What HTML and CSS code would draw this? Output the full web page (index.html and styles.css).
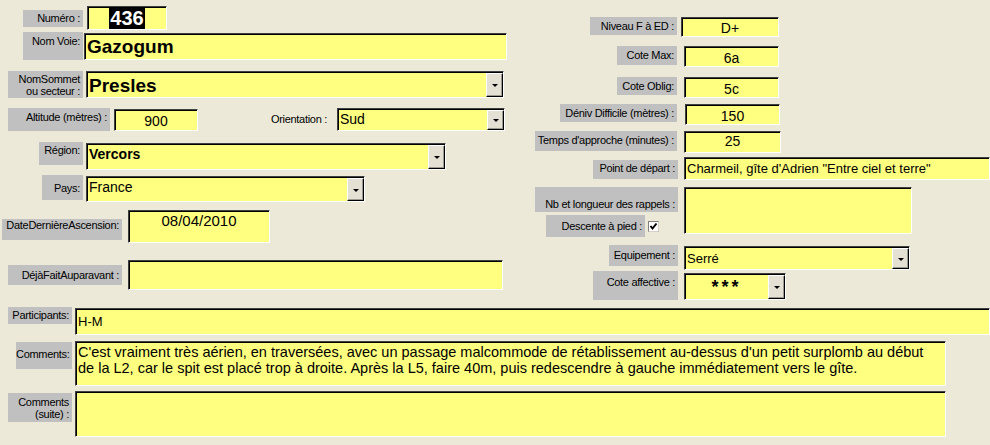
FILE: index.html
```html
<!DOCTYPE html>
<html lang="fr">
<head>
  <meta charset="UTF-8">
  <title>Voies</title>
  <link rel="stylesheet" href="styles.css">
</head>
<body>
  <div class="form">
    <div class="top">
      <div class="col-left">
        <div class="row r-numero">
          <div class="lbl">Numéro :</div>
          <div class="fld"><div class="val center"><span class="sel">436</span></div></div>
        </div>
        <div class="row r-voie">
          <div class="lbl">Nom Voie:</div>
          <div class="fld big"><div class="val">Gazogum</div></div>
        </div>
        <div class="row r-sommet">
          <div class="lbl two">NomSommet<br>ou secteur :</div>
          <div class="fld big"><div class="val">Presles</div><div class="drop"></div></div>
        </div>
        <div class="row r-alt">
          <div class="lbl">Altitude (mètres) :</div>
          <div class="fld alt"><div class="val center">900</div></div>
          <div class="lbl plain">Orientation :</div>
          <div class="fld orient"><div class="val">Sud</div><div class="drop"></div></div>
        </div>
        <div class="row r-region">
          <div class="lbl">Région:</div>
          <div class="fld"><div class="val bold">Vercors</div><div class="drop"></div></div>
        </div>
        <div class="row r-pays">
          <div class="lbl">Pays:</div>
          <div class="fld"><div class="val">France</div><div class="drop"></div></div>
        </div>
        <div class="row r-date">
          <div class="lbl">DateDernièreAscension:</div>
          <div class="fld"><div class="val center">08/04/2010</div></div>
        </div>
        <div class="row r-deja">
          <div class="lbl">DéjàFaitAuparavant :</div>
          <div class="fld"><div class="val"></div></div>
        </div>
      </div>

      <div class="col-right">
        <div class="row r-niveau">
          <div class="lbl">Niveau F à ED :</div>
          <div class="fld"><div class="val center">D+</div></div>
        </div>
        <div class="row r-cmax">
          <div class="lbl">Cote Max:</div>
          <div class="fld"><div class="val center">6a</div></div>
        </div>
        <div class="row r-cobl">
          <div class="lbl">Cote Oblig:</div>
          <div class="fld"><div class="val center">5c</div></div>
        </div>
        <div class="row r-deniv">
          <div class="lbl">Déniv Difficile (mètres) :</div>
          <div class="fld"><div class="val center">150</div></div>
        </div>
        <div class="row r-temps">
          <div class="lbl">Temps d'approche (minutes) :</div>
          <div class="fld"><div class="val center">25</div></div>
        </div>
        <div class="row r-point">
          <div class="lbl">Point de départ :</div>
          <div class="fld small"><div class="val">Charmeil, gîte d'Adrien "Entre ciel et terre"</div></div>
        </div>
        <div class="row r-rappels">
          <div class="lbl-group">
            <div class="lbl nb">Nb et longueur des rappels :</div>
            <div class="descente">
              <div class="lbl">Descente à pied :</div>
              <svg class="check" width="11" height="11" viewBox="0 0 11 11">
                <rect x="0.5" y="0.5" width="10" height="10" fill="#fff" stroke="#808080"/>
                <path d="M0.5 10.5 H10.5 V0.5" fill="none" stroke="#d4d0c8"/>
                <path d="M2.5 5 L4.5 7.5 L8.5 2.5" fill="none" stroke="#000" stroke-width="2"/>
              </svg>
            </div>
          </div>
          <div class="fld"><div class="val"></div></div>
        </div>
        <div class="row r-equip">
          <div class="lbl">Equipement :</div>
          <div class="fld small"><div class="val">Serré</div><div class="drop"></div></div>
        </div>
        <div class="row r-cote">
          <div class="lbl">Cote affective :</div>
          <div class="fld"><div class="val center stars">***</div><div class="drop"></div></div>
        </div>
      </div>
    </div>

    <div class="bottom">
      <div class="row r-part">
        <div class="lbl">Participants:</div>
        <div class="fld small"><div class="val">H-M</div></div>
      </div>
      <div class="row r-comm">
        <div class="lbl">Comments:</div>
        <div class="fld"><div class="val">C'est vraiment très aérien, en traversées, avec un passage malcommode de rétablissement au-dessus d'un petit surplomb au début<br>de la L2, car le spit est placé trop à droite. Après la L5, faire 40m, puis redescendre à gauche immédiatement vers le gîte.</div></div>
      </div>
      <div class="row r-suite">
        <div class="lbl two">Comments<br>(suite) :</div>
        <div class="fld"><div class="val"></div></div>
      </div>
    </div>
  </div>
</body>
</html>
```

FILE: styles.css
```css
body {
  margin: 0;
  background: #ece9d8;
  font-family: "Liberation Sans", Arial, sans-serif;
  width: 990px;
  height: 445px;
  overflow: hidden;
}
.form {
  width: 990px;
}
.top {
  display: flex;
}
.col-left {
  width: 530px;
  padding-top: 6px;
}
.col-right {
  width: 460px;
  padding-top: 17px;
}
.row {
  display: flex;
  align-items: flex-start;
}

/* labels */
.lbl {
  box-sizing: border-box;
  background: #c0c0c0;
  color: #000;
  font-size: 11px;
  letter-spacing: -0.3px;
  line-height: 13px;
  text-align: right;
  padding: 3px 3px 0 0;
  white-space: nowrap;
  flex-shrink: 0;
}
.lbl.two {
  line-height: 12px;
  padding-top: 2px;
}
.lbl.plain {
  background: none;
}

/* fields */
.fld {
  box-sizing: border-box;
  display: flex;
  flex-shrink: 0;
  background: #ffff80;
  border: 1px solid;
  border-color: #404040 #fff #fff #404040;
  box-shadow: inset 1px 1px 0 #000;
  color: #000;
  font-size: 14px;
  line-height: 16px;
  overflow: hidden;
}
.val {
  flex: 1;
  padding: 2px 0 0 2px;
  white-space: nowrap;
  overflow: hidden;
}
.val.center {
  text-align: center;
  padding-left: 0;
}
.bold {
  font-weight: bold;
}
.fld.big {
  font-size: 19px;
  line-height: 22px;
  font-weight: bold;
}
.fld.small {
  font-size: 13px;
  line-height: 15px;
}
.drop {
  box-sizing: border-box;
  width: 17px;
  margin: 1px 0 0 0;
  background: #e4e1d4;
  border: 1px solid;
  border-color: #fff #000 #000 #fff;
  box-shadow: inset -1px -1px 0 #9d9b91;
  display: flex;
  align-items: center;
  justify-content: center;
}
.drop::after {
  content: "";
  border-left: 3px solid transparent;
  border-right: 3px solid transparent;
  border-top: 3px solid #000;
  margin-top: 1px;
}
.sel {
  display: inline-block;
  background: #000;
  color: #fff;
  font-weight: bold;
  font-size: 20px;
  line-height: 21px;
  padding: 0 1px;
}

/* left column */
.r-numero .lbl { margin: 4px 0 0 23px; width: 60px; height: 17px; padding-top: 2px; }
.r-numero .fld { margin-left: 4px; width: 80px; height: 24px; }
.r-numero .val { padding-top: 1px; }

.r-voie { margin-top: 2px; }
.r-voie .lbl { margin-left: 23px; width: 60px; height: 28px; }
.r-voie .fld { margin: 1px 0 0 1px; width: 423px; height: 27px; }
.r-voie .val { padding-top: 2px; }

.r-sommet { margin-top: 11px; }
.r-sommet .lbl { margin-left: 8px; width: 75px; height: 27px; }
.r-sommet .fld { margin-left: 3px; width: 418px; height: 27px; }
.r-sommet .val { padding-top: 3px; }

.r-alt { margin-top: 10px; }
.r-alt .lbl { margin-left: 8px; width: 102px; height: 23px; }
.r-alt .fld.alt { margin: 1px 0 0 4px; width: 84px; height: 22px; }
.r-alt .alt .val { padding-top: 3px; }
.r-alt .lbl.plain { margin-left: 0; width: 132px; padding-top: 5px; }
.r-alt .fld.orient { margin-left: 7px; width: 168px; height: 23px; }

.r-region { margin-top: 11px; }
.r-region .lbl { margin-left: 39px; width: 44px; height: 23px; padding-top: 2px; }
.r-region .fld { margin: 1px 0 0 3px; width: 360px; height: 27px; }

.r-pays { margin-top: 5px; }
.r-pays .lbl { margin-left: 42px; width: 41px; height: 25px; padding-top: 7px; }
.r-pays .fld { margin: 1px 0 0 3px; width: 279px; height: 26px; }

.r-date { margin-top: 8px; }
.r-date .lbl { margin: 9px 0 0 2px; width: 120px; height: 21px; padding-top: 0; }
.r-date .fld { margin-left: 6px; width: 142px; height: 33px; font-size: 15px; line-height: 17px; }
.r-date .val { padding-top: 1px; }

.r-deja { margin-top: 17px; }
.r-deja .lbl { margin: 5px 0 0 8px; width: 114px; height: 20px; padding-top: 4px; }
.r-deja .fld { margin-left: 6px; width: 375px; height: 30px; }

/* right column */
.r-niveau .lbl { margin-left: 60px; width: 87px; height: 18px; }
.r-niveau .fld { margin-left: 4px; width: 98px; height: 20px; }

.r-cmax { margin-top: 9px; }
.r-cmax .lbl { margin-left: 87px; width: 60px; height: 19px; }
.r-cmax .fld { margin-left: 7px; width: 95px; height: 21px; }
.r-cmax .val { padding-top: 3px; }

.r-cobl { margin-top: 10px; }
.r-cobl .lbl { margin-left: 87px; width: 60px; height: 18px; }
.r-cobl .fld { margin-left: 7px; width: 95px; height: 21px; }
.r-cobl .val { padding-top: 3px; }

.r-deniv { margin-top: 6px; }
.r-deniv .lbl { margin-left: 30px; width: 117px; height: 18px; }
.r-deniv .fld { margin-left: 8px; width: 95px; height: 21px; }
.r-deniv .val { padding-top: 3px; }

.r-temps { margin-top: 6px; }
.r-temps .lbl { margin-left: 5px; width: 142px; height: 20px; }
.r-temps .fld { margin-left: 7px; width: 97px; height: 22px; }
.r-temps .val { padding-top: 1px; }

.r-point { margin-top: 4px; }
.r-point .lbl { margin: 3px 0 0 63px; width: 85px; height: 19px; padding-top: 2px; }
.r-point .fld { margin-left: 6px; width: 306px; height: 23px; }
.r-point .val { padding-top: 3px; }

.r-rappels { margin-top: 7px; }
.lbl-group {
  width: 148px;
  flex-shrink: 0;
}
.lbl.nb { margin-left: 5px; width: 143px; height: 25px; padding-top: 11px; }
.descente {
  display: flex;
  align-items: flex-start;
  margin-top: 3px;
}
.descente .lbl { margin-left: 16px; width: 99px; height: 22px; padding-top: 5px; }
.check { margin: 6px 0 0 3px; }
.r-rappels .fld { margin-left: 6px; width: 228px; height: 47px; }

.r-equip { margin-top: 8px; }
.r-equip .lbl { margin-left: 79px; width: 69px; height: 21px; padding-top: 4px; }
.r-equip .fld { margin: 1px 0 0 6px; width: 226px; height: 24px; }
.r-equip .val { padding-top: 4px; }

.r-cote { margin-top: 1px; }
.r-cote .lbl { margin-left: 63px; width: 85px; height: 29px; padding-top: 5px; }
.r-cote .fld { margin: 2px 0 0 6px; width: 102px; height: 27px; }
.stars {
  font-weight: bold;
  font-size: 18px;
  letter-spacing: 3px;
  line-height: 20px;
  padding-top: 3px;
}

/* bottom */
.bottom {
  padding-top: 7px;
}
.r-part .lbl { margin-left: 8px; width: 64px; height: 17px; padding-top: 2px; }
.r-part .fld { margin: 1px 0 0 3px; width: 915px; height: 27px; }
.r-part .val { padding-top: 5px; }

.r-comm { margin-top: 6px; }
.r-comm .lbl { margin: 1px 0 0 16px; width: 56px; height: 27px; padding-top: 6px; }
.r-comm .fld { margin-left: 3px; width: 871px; height: 45px; font-size: 14.5px; }
.r-comm .val { padding-top: 2px; }

.r-suite { margin-top: 5px; }
.r-suite .lbl { margin: 2px 0 0 8px; width: 64px; height: 29px; padding-top: 3px; }
.r-suite .fld { margin-left: 3px; width: 871px; height: 46px; }
```
